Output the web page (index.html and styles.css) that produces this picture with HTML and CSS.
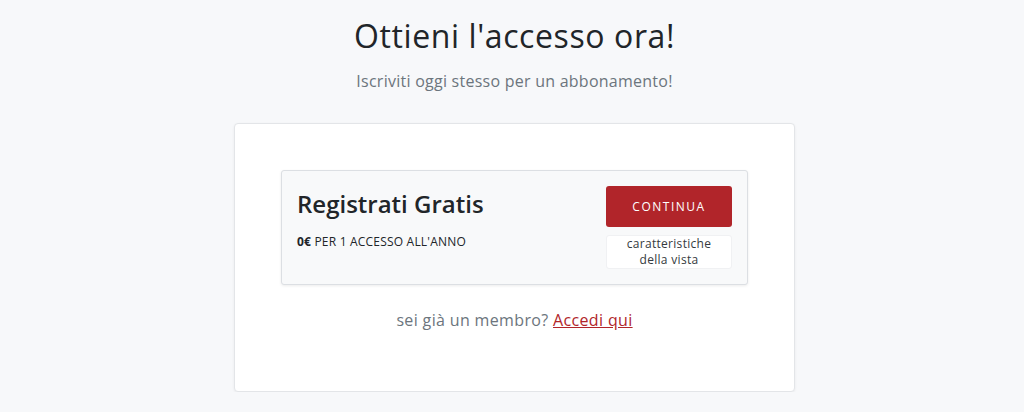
FILE: index.html
```html
<!DOCTYPE html>
<html>
	<head>
		<meta http-equiv="Content-Type" content="text/html; charset=UTF-8">
		<meta name="viewport" content="width=device-width, initial-scale=1">
		<title>Ottieni l'accesso ora!</title>
		<link rel="stylesheet" href="styles.css">
	</head>
	<body>
		<div class="page">
			<h1 class="page-title">Ottieni l'accesso ora!</h1>
			<p class="page-sub">Iscriviti oggi stesso per un abbonamento!</p>
			<div class="card">
				<div class="plan">
					<div class="plan-info">
						<h3 class="plan-name">Registrati Gratis</h3>
						<div class="plan-price"><b>0€</b> PER 1 ACCESSO ALL'ANNO</div>
					</div>
					<div class="plan-actions">
						<a href="#" class="btn-continue">CONTINUA</a>
						<a href="#" class="btn-features">caratteristiche<br>della vista</a>
					</div>
				</div>
				<p class="card-login">sei già un membro? <a href="#">Accedi qui</a></p>
			</div>
		</div>
	</body>
</html>
```

FILE: styles.css
```css
body{margin: 0; background: #f7f8fa; font-family: "Open Sans", "Noto Sans", sans-serif; color: #212529;}
.page{display: flex; flex-direction: column; align-items: center; padding: 17px 0 0 5px;}
.page-title{margin: 0; font-size: 32px; line-height: 38px; font-weight: 500; letter-spacing: 0.6px; color: #212529;}
.page-sub{margin: 14px 0 0; font-size: 16px; line-height: 24px; letter-spacing: 0.25px; color: #6c757d;}
.card{box-sizing: border-box; width: 561px; margin-top: 30px; padding: 46px 46px 59px; background: #fff; border: 1px solid #e3e5e8; border-radius: 4px; box-shadow: 0 1px 3px rgba(0,0,0,0.06);}
.plan{display: flex; justify-content: space-between; padding: 15px 15px 15px 15px; background: #f8f9fa; border: 1px solid #dcdfe3; border-radius: 3px; box-shadow: 0 1px 3px rgba(0,0,0,0.08);}
.plan-name{margin: 3px 0 0; font-size: 24px; line-height: 30px; font-weight: 600; color: #212529;}
.plan-price{margin-top: 14px; font-size: 12px; line-height: 18px; letter-spacing: 0.2px; color: #212529;}
.plan-price b{font-weight: 700;}
.plan-actions{display: flex; flex-direction: column; width: 126px; gap: 8px;}
.btn-continue{display: block; padding: 12px 0; background: #b1252a; color: #fff; border-radius: 3px; text-align: center; text-decoration: none; font-size: 12px; line-height: 17px; letter-spacing: 1.5px;}
.btn-features{display: block; padding: 0; background: #fff; border: 1px solid #f0f1f3; border-radius: 3px; text-align: center; text-decoration: none; color: #343a40; font-size: 12px; line-height: 16px; letter-spacing: 0.3px;}
.card-login{margin: 23px 0 0; text-align: center; font-size: 16px; line-height: 24px; letter-spacing: 0.35px; color: #6c757d;}
.card-login a{color: #b1252a;}
```
